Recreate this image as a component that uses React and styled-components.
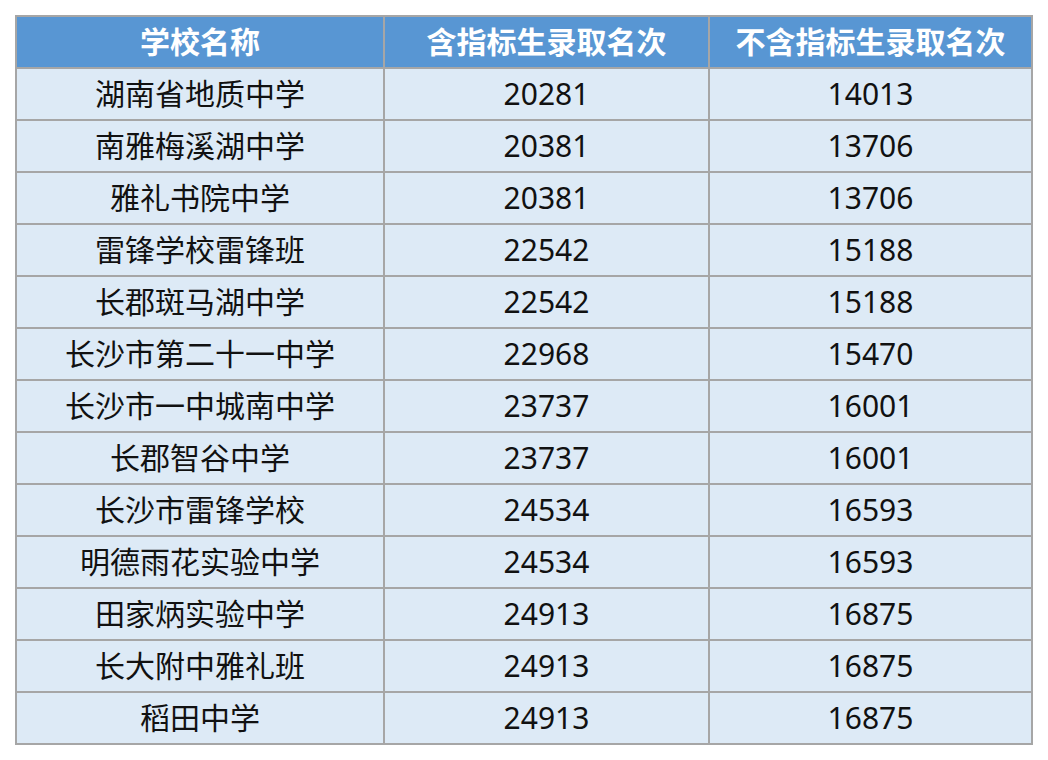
import React from "react";
import styled, { createGlobalStyle } from "styled-components";

const Global = createGlobalStyle`
  html, body { margin: 0; padding: 0; background: #ffffff; }
  body { font-family: "Noto Sans", "Noto Sans CJK SC", sans-serif; }
`;

const Page = styled.div`
  padding: 15px 0 0 15px;
`;

const Table = styled.table`
  border-collapse: collapse;
  table-layout: fixed;
  font-family: "Noto Sans", "Noto Sans CJK SC", sans-serif;
  font-size: 30px;
`;

const HeadCell = styled.th`
  background: #5896d3;
  color: #ffffff;
  font-weight: 700;
  height: 50px;
  padding: 0;
  border: 2px solid #a6a6a6;
  text-align: center;
  width: ${(p) => p.$w}px;
  line-height: 1;
`;

const Cell = styled.td`
  background: #ddeaf6;
  color: #111111;
  height: 50px;
  padding: 0;
  border: 2px solid #a6a6a6;
  text-align: center;
  line-height: 1;
`;

const rows = [
  ["湖南省地质中学", "20281", "14013"],
  ["南雅梅溪湖中学", "20381", "13706"],
  ["雅礼书院中学", "20381", "13706"],
  ["雷锋学校雷锋班", "22542", "15188"],
  ["长郡斑马湖中学", "22542", "15188"],
  ["长沙市第二十一中学", "22968", "15470"],
  ["长沙市一中城南中学", "23737", "16001"],
  ["长郡智谷中学", "23737", "16001"],
  ["长沙市雷锋学校", "24534", "16593"],
  ["明德雨花实验中学", "24534", "16593"],
  ["田家炳实验中学", "24913", "16875"],
  ["长大附中雅礼班", "24913", "16875"],
  ["稻田中学", "24913", "16875"],
];

export default function App() {
  return (
    <>
      <Global />
      <Page>
        <Table>
          <thead>
            <tr>
              <HeadCell $w={366}>学校名称</HeadCell>
              <HeadCell $w={323}>含指标生录取名次</HeadCell>
              <HeadCell $w={321}>不含指标生录取名次</HeadCell>
            </tr>
          </thead>
          <tbody>
            {rows.map((r) => (
              <tr key={r[0]}>
                <Cell>{r[0]}</Cell>
                <Cell>{r[1]}</Cell>
                <Cell>{r[2]}</Cell>
              </tr>
            ))}
          </tbody>
        </Table>
      </Page>
    </>
  );
}
